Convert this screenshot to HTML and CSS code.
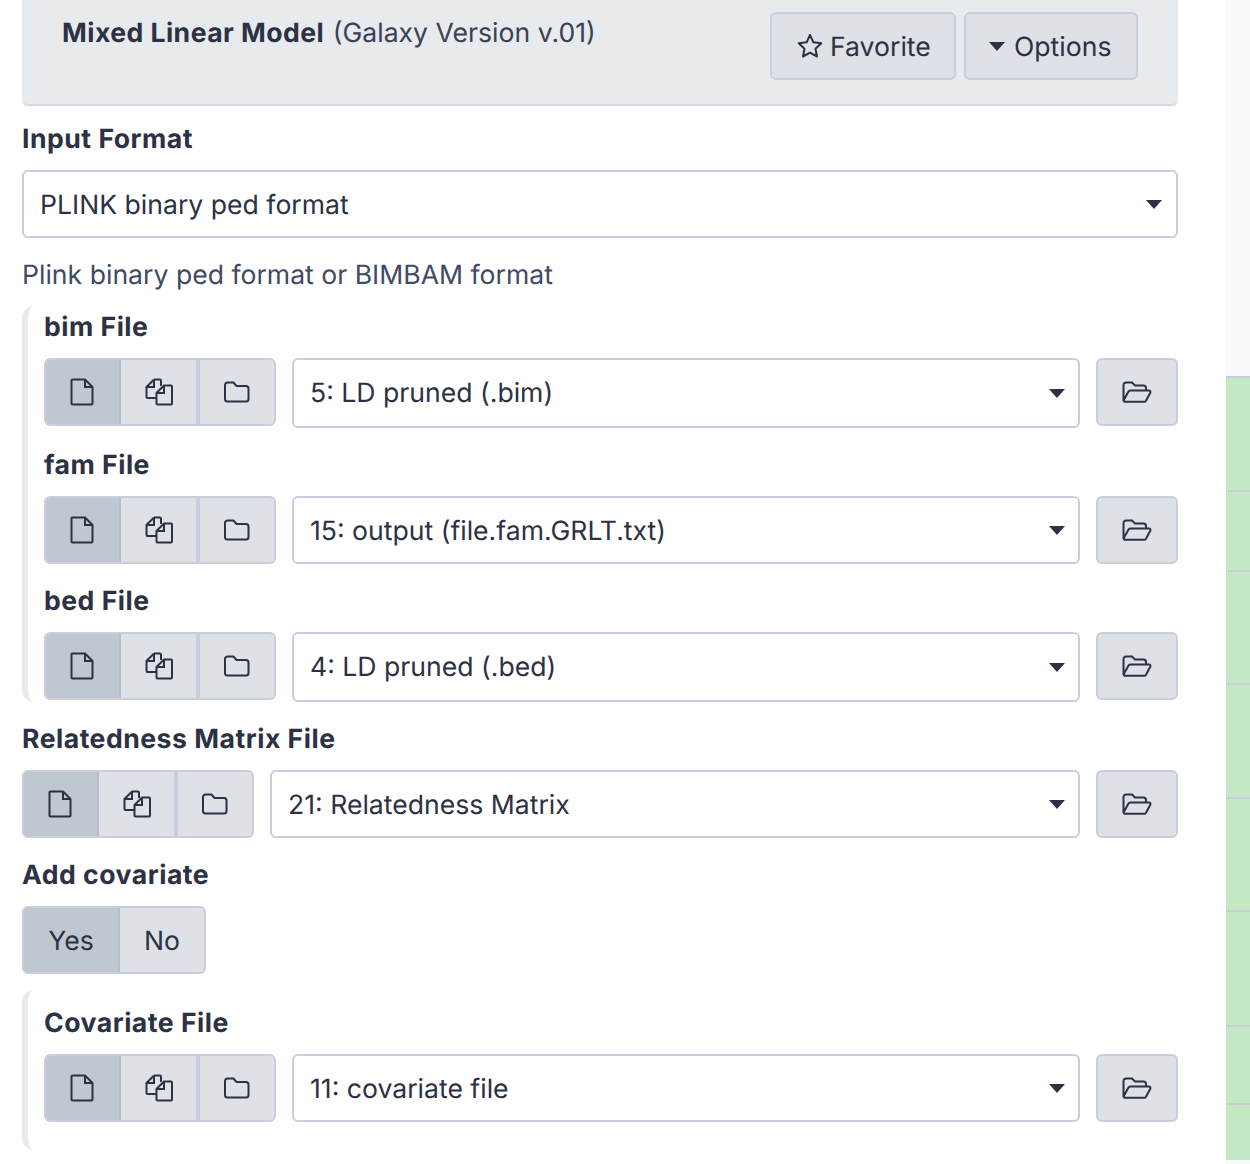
FILE: index.html
```html
<!DOCTYPE html>
<html lang="en">
<head>
    <meta charset="UTF-8">
    <title>Mixed Linear Model</title>
    <link rel="stylesheet" href="styles.css">
</head>
<body>
    <svg class="defs">
        <symbol id="i-file" viewBox="0 0 24 28"><path d="M1.500 2.500a1 1 0 0 1 1-1H15l7.500 7.500V25.500a1 1 0 0 1-1 1H2.500a1 1 0 0 1-1-1z M15 1.500V9h7.500" fill="none" stroke="currentColor" stroke-width="2"/></symbol>
        <symbol id="i-files" viewBox="0 0 28 28"><path d="M9 1.500h6a1 1 0 0 1 1 1V8M9 1.500L1.500 9v10a1 1 0 0 0 1 1H11M9 1.500V9H1.500M19 7.500h7a1 1 0 0 1 1 1v17a1 1 0 0 1-1 1H12.500a1 1 0 0 1-1-1V15zM19 7.500V15h-7.500" fill="none" stroke="currentColor" stroke-width="2"/></symbol>
        <symbol id="i-folder" viewBox="0 0 26 22"><path d="M1 4a2.500 2.500 0 0 1 2.500-2.500h6l3 3.500h9.500A2.500 2.500 0 0 1 24.500 7.500v10.500a2.500 2.500 0 0 1-2.500 2.500H3.500A2.500 2.500 0 0 1 1 18z" fill="none" stroke="currentColor" stroke-width="2"/></symbol>
        <symbol id="i-open" viewBox="0 0 30 22"><path d="M1.500 19V4A2.500 2.500 0 0 1 4 1.500h6l3 3h8.500A2.500 2.500 0 0 1 24 7v2.500M1.500 19.500l5-9a2 2 0 0 1 1.800-1H27a1.500 1.500 0 0 1 1.300 2.300l-4.300 8a2 2 0 0 1-1.800 1H2.500z" fill="none" stroke="currentColor" stroke-width="2"/></symbol>
        <symbol id="i-star" viewBox="0 0 26 25"><path d="M13 2l3.400 7.300 7.900 1-5.800 5.400 1.500 7.800L13 19.700l-7 3.800 1.500-7.800-5.800-5.400 7.900-1z" fill="none" stroke="currentColor" stroke-width="2" stroke-linejoin="round"/></symbol>
    </svg>

    <div class="layout">
        <main class="center">
            <div class="tool-header">
                <div class="tool-title"><b>Mixed Linear Model</b> (Galaxy Version v.01)</div>
                <div class="tool-buttons">
                    <button class="btn btn-favorite"><svg class="icon-star"><use href="#i-star"/></svg>Favorite</button>
                    <button class="btn btn-options"><span class="caret caret-btn"></span>Options</button>
                </div>
            </div>

            <div class="field field-format">
                <div class="field-label">Input Format</div>
                <div class="select select-format"><span>PLINK binary ped format</span><span class="caret"></span></div>
                <div class="help">Plink binary ped format or BIMBAM format</div>
            </div>

            <div class="section section-plink">
                <div class="field-label">bim File</div>
                <div class="data-row">
                    <div class="btn-group">
                        <span class="seg active"><svg class="icon-file"><use href="#i-file"/></svg></span>
                        <span class="seg"><svg class="icon-files"><use href="#i-files"/></svg></span>
                        <span class="seg"><svg class="icon-folder"><use href="#i-folder"/></svg></span>
                    </div>
                    <div class="select select-tall"><span>5: LD pruned (.bim)</span><span class="caret"></span></div>
                    <span class="browse"><svg class="icon-open"><use href="#i-open"/></svg></span>
                </div>
                <div class="field-label">fam File</div>
                <div class="data-row">
                    <div class="btn-group">
                        <span class="seg active"><svg class="icon-file"><use href="#i-file"/></svg></span>
                        <span class="seg"><svg class="icon-files"><use href="#i-files"/></svg></span>
                        <span class="seg"><svg class="icon-folder"><use href="#i-folder"/></svg></span>
                    </div>
                    <div class="select"><span>15: output (file.fam.GRLT.txt)</span><span class="caret"></span></div>
                    <span class="browse"><svg class="icon-open"><use href="#i-open"/></svg></span>
                </div>
                <div class="field-label">bed File</div>
                <div class="data-row data-row-last">
                    <div class="btn-group">
                        <span class="seg active"><svg class="icon-file"><use href="#i-file"/></svg></span>
                        <span class="seg"><svg class="icon-files"><use href="#i-files"/></svg></span>
                        <span class="seg"><svg class="icon-folder"><use href="#i-folder"/></svg></span>
                    </div>
                    <div class="select select-tall"><span>4: LD pruned (.bed)</span><span class="caret"></span></div>
                    <span class="browse"><svg class="icon-open"><use href="#i-open"/></svg></span>
                </div>
            </div>

            <div class="field-label label-matrix">Relatedness Matrix File</div>
            <div class="data-row">
                <div class="btn-group">
                    <span class="seg active"><svg class="icon-file"><use href="#i-file"/></svg></span>
                    <span class="seg"><svg class="icon-files"><use href="#i-files"/></svg></span>
                    <span class="seg"><svg class="icon-folder"><use href="#i-folder"/></svg></span>
                </div>
                <div class="select"><span>21: Relatedness Matrix</span><span class="caret"></span></div>
                <span class="browse"><svg class="icon-open"><use href="#i-open"/></svg></span>
            </div>

            <div class="field-label label-covar">Add covariate</div>
            <div class="btn-group yes-no">
                <span class="seg seg-text active">Yes</span>
                <span class="seg seg-text seg-no">No</span>
            </div>

            <div class="section section-covar">
                <div class="field-label">Covariate File</div>
                <div class="data-row">
                    <div class="btn-group">
                        <span class="seg active"><svg class="icon-file"><use href="#i-file"/></svg></span>
                        <span class="seg"><svg class="icon-files"><use href="#i-files"/></svg></span>
                        <span class="seg"><svg class="icon-folder"><use href="#i-folder"/></svg></span>
                    </div>
                    <div class="select"><span>11: covariate file</span><span class="caret"></span></div>
                    <span class="browse"><svg class="icon-open"><use href="#i-open"/></svg></span>
                </div>
            </div>
        </main>

        <aside class="history">
            <div class="history-top"></div>
            <div class="hist-item h114"></div>
            <div class="hist-item h80"></div>
            <div class="hist-item h113"></div>
            <div class="hist-item h114"></div>
            <div class="hist-item h113"></div>
            <div class="hist-item h115"></div>
            <div class="hist-item h78"></div>
            <div class="hist-item h57"></div>
        </aside>
    </div>
</body>
</html>
```
FILE: styles.css
```css
* {
    margin: 0;
    padding: 0;
    box-sizing: border-box;
}

html, body {
    height: 100%;
    overflow: hidden;
}

body {
    font-family: Inter, "Liberation Sans", sans-serif;
    font-size: 26.6px;
    color: #2c3143;
    background-color: #fff;
    text-rendering: geometricPrecision;
}

.defs {
    display: none;
}

.layout {
    display: flex;
    height: 1164px;
}

.center {
    width: 1156px;
    margin-left: 22px;
    margin-right: 48px;
    flex-shrink: 0;
}

.tool-header {
    display: flex;
    justify-content: space-between;
    height: 106px;
    padding: 12px 40px 0 40px;
    background-color: #e8ebee;
    border-bottom: 2px solid #d6d9e0;
    border-radius: 0 0 6px 6px;
}

.tool-title {
    padding-top: 4px;
    line-height: 34px;
    color: #3a4154;
}

.tool-title b {
    margin-right: 1px;
    font-weight: 700;
    letter-spacing: 0.45px;
    color: #2c3143;
}

.tool-buttons {
    display: flex;
    gap: 8px;
}

.btn {
    display: flex;
    align-items: center;
    height: 68px;
    padding-top: 2px;
    font-family: inherit;
    font-size: 26.6px;
    color: #2c3143;
    background-color: #dee1e6;
    border: 2px solid #c9cddd;
    border-radius: 6px;
    text-rendering: geometricPrecision;
}

.btn-favorite {
    width: 186px;
    padding-left: 25px;
}

.btn-options {
    width: 174px;
    padding-left: 23px;
}

.icon-star {
    width: 26px;
    height: 25px;
    margin-right: 7px;
    margin-bottom: 4px;
}

.caret {
    display: block;
    width: 0;
    height: 0;
    border-left: 8px solid transparent;
    border-right: 8px solid transparent;
    border-top: 9px solid #2c3143;
}

.caret-btn {
    margin-right: 9px;
    margin-bottom: 2px;
}

.field-format {
    padding-top: 16px;
}

.field-label {
    font-weight: 700;
    letter-spacing: 0.5px;
    line-height: 34px;
}

.select {
    display: flex;
    flex: 1;
    justify-content: space-between;
    align-items: center;
    height: 68px;
    padding: 0 13px 0 16px;
    background-color: #fff;
    border: 2px solid #c9cddd;
    border-radius: 6px;
}

.select span:first-child {
    padding-top: 2px;
}

.select-tall {
    height: 70px;
}

.select-tall span:first-child {
    padding-top: 0;
}

.select-format {
    flex: none;
    margin-top: 14px;
    padding-right: 14px;
}

.help {
    margin-top: 20px;
    line-height: 34px;
    color: #3f4a63;
}

.section {
    padding-left: 16px;
    border-left: 6px solid #e8ebee;
    border-radius: 12px 0 0 12px;
}

.section-plink {
    margin-top: 14px;
    padding-top: 4px;
}

.data-row {
    display: flex;
    align-items: flex-start;
    gap: 16px;
    margin-top: 14px;
    margin-bottom: 20px;
}

.data-row-last {
    margin-bottom: 0;
}

.btn-group {
    display: flex;
    flex-shrink: 0;
    height: 68px;
    overflow: hidden;
    background-color: #dee1e6;
    border: 2px solid #c9cddd;
    border-radius: 6px;
}

.seg {
    display: flex;
    justify-content: center;
    align-items: center;
    width: 75px;
}

.seg:last-child {
    width: 78px;
    border-left: 4px solid #c9cddd;
}

.seg.active {
    background-color: #bfc8d1;
    border-right: 2px solid #b6bfcb;
}

.seg-text {
    padding-top: 2px;
}

.seg-text:first-child {
    width: 96px;
}

.seg-text.seg-no {
    width: 84px;
    border-left: 0;
}

.yes-no {
    width: 184px;
    margin-top: 14px;
}

.icon-file {
    width: 24px;
    height: 28px;
    margin-right: 2px;
}

.icon-files {
    width: 28px;
    height: 28px;
}

.icon-folder {
    width: 26px;
    height: 22px;
}

.icon-open {
    width: 30px;
    height: 22px;
}

.browse {
    display: flex;
    flex-shrink: 0;
    justify-content: center;
    align-items: center;
    width: 82px;
    height: 68px;
    background-color: #dee1e6;
    border: 2px solid #c9cddd;
    border-radius: 6px;
}

.label-matrix {
    margin-top: 20px;
}

.label-covar {
    margin-top: 20px;
}

.section-covar {
    margin-top: 16px;
    padding-top: 16px;
    height: 160px;
}

.section-covar .data-row {
    margin-bottom: 0;
}

.history {
    flex: 1;
    background-color: #f8f9fa;
}

.history-top {
    height: 376px;
}

.hist-item {
    background-color: #c3e9c4;
    border-top: 2px solid #c9cddd;
}

.h114 { height: 114px; }
.h80 { height: 80px; }
.h113 { height: 113px; }
.h115 { height: 115px; }
.h78 { height: 78px; }
.h57 { height: 57px; }
```
